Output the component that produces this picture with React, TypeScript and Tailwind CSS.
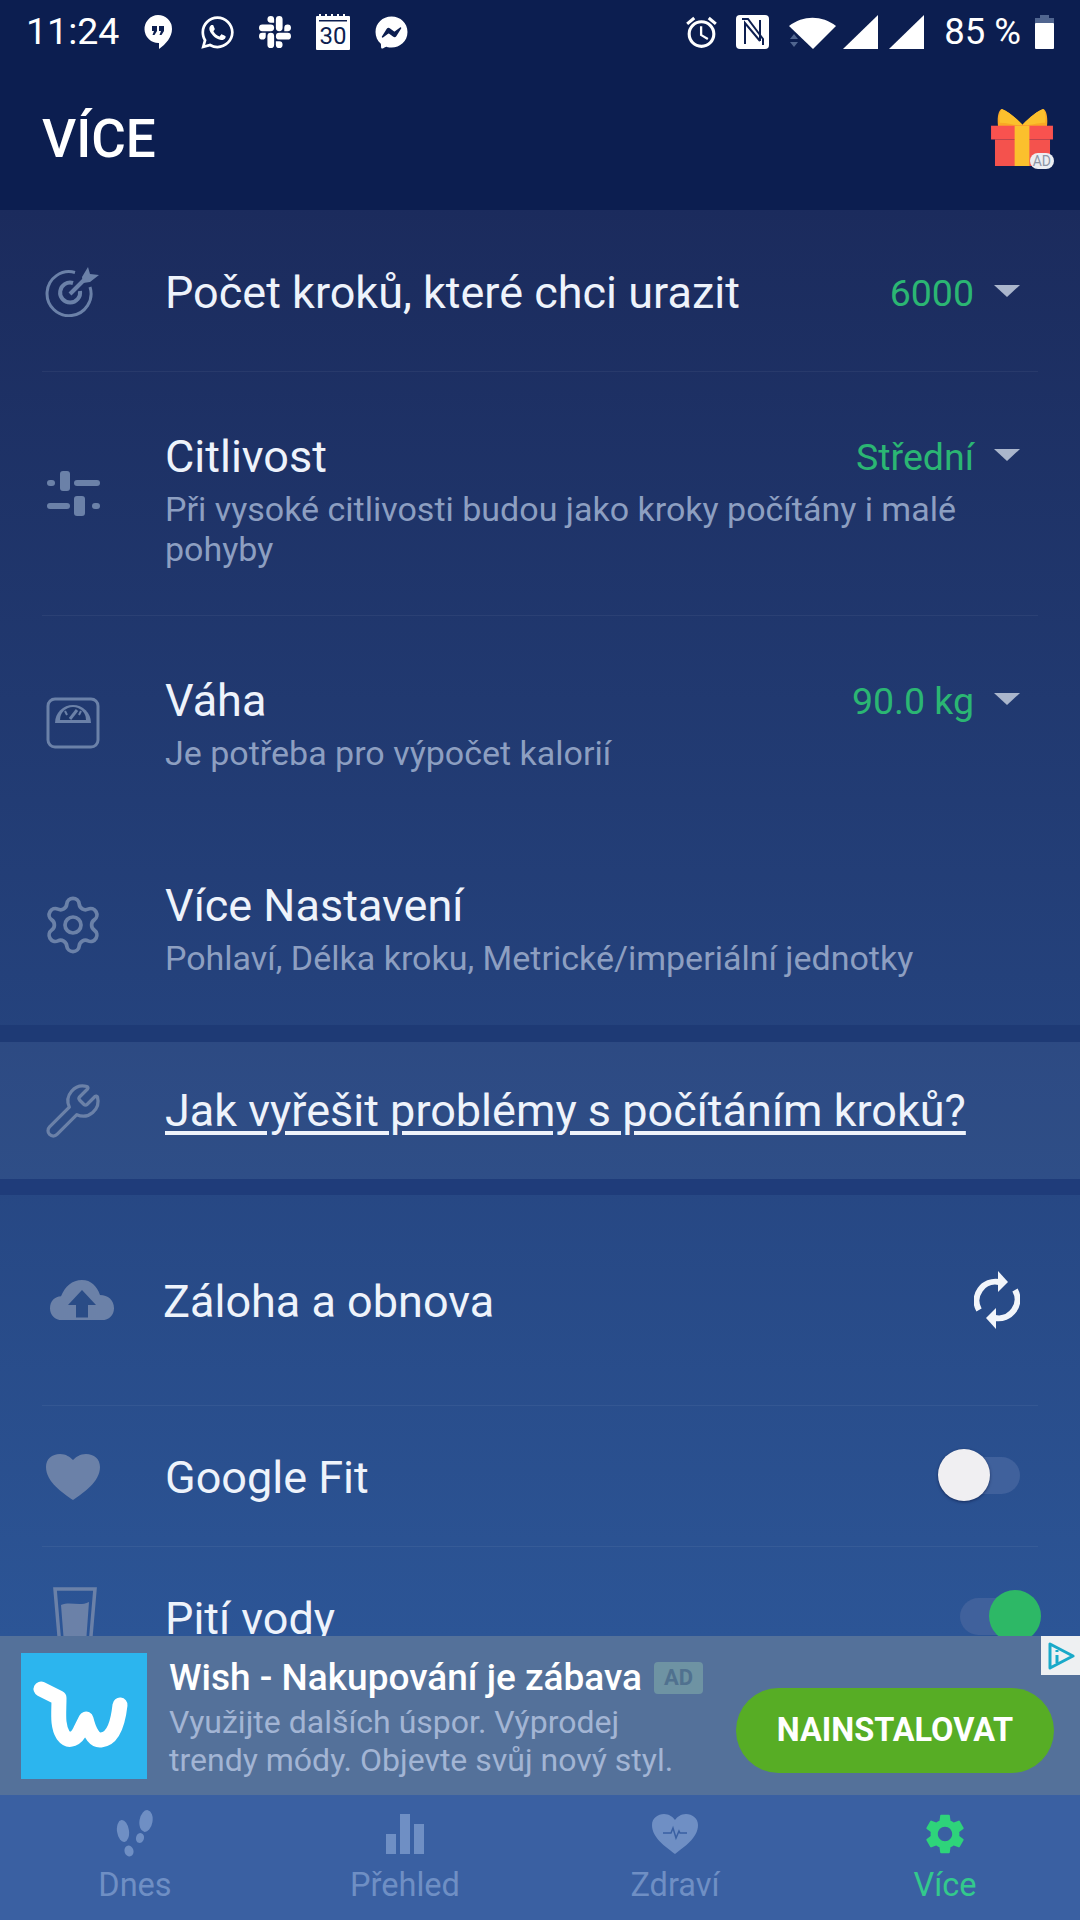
import { FaFacebookMessenger, FaWhatsapp } from "react-icons/fa";
import { MdOutlineAlarm, MdSettings } from "react-icons/md";
import { SiSlack } from "react-icons/si";
import { Settings, Wrench } from "lucide-react";
import type { ReactNode } from "react";

const ICON = "#6b81a8";

function TargetIcon() {
  return (
    <svg width="56" height="52" viewBox="0 0 56 52" fill="none" stroke={ICON}>
      <path d="M30 7.500A22 22 0 1 0 45 22" strokeWidth="3" />
      <path d="M28 18A10 10 0 1 0 35 26" strokeWidth="4" />
      <path d="M25 29L42 12" strokeWidth="4" />
      <path d="M37 12l6-10 2 7 9 1-9 7-7 1z" fill={ICON} stroke="none" />
    </svg>
  );
}

function SlidersIcon() {
  return (
    <svg width="54" height="46" viewBox="0 0 54 46" fill={ICON}>
      <rect x="1" y="9" width="8" height="6" rx="3" />
      <rect x="14" y="0" width="10" height="20" rx="3" />
      <rect x="28" y="9" width="26" height="6" rx="3" />
      <rect x="1" y="32" width="23" height="6" rx="3" />
      <rect x="28" y="25" width="11" height="20" rx="3" />
      <rect x="46" y="32" width="8" height="6" rx="3" />
    </svg>
  );
}

function ScaleIcon() {
  return (
    <svg width="54" height="52" viewBox="0 0 54 52" fill="none" stroke={ICON}>
      <rect x="2" y="2" width="50" height="48" rx="7" strokeWidth="3" />
      <path d="M9 26a18 18 0 0 1 36 0z" fill={ICON} stroke="none" />
      <path d="M14 23a13 13 0 0 1 26 0z" fill="#1d3569" stroke="none" />
      <path d="M24 22l7-9" strokeWidth="3" />
      <path d="M19 14l2 4M35 14l-2 4" strokeWidth="2" />
    </svg>
  );
}

function CloudUploadIcon() {
  return (
    <svg width="64" height="40" viewBox="0 0 64 32" preserveAspectRatio="none" fill={ICON}>
      <path d="M12 32C5 32 0 28 0 22.500 0 17 5 13 11 13 15 5 22 0 32 0 41 0 47 5 50 12 58 12 64 16 64 22.500 64 28 59 32 52 32Z" />
      <path d="M32 8L46 20H38V30H26V20H18Z" fill="#2a4c86" />
    </svg>
  );
}

function SyncIcon() {
  return (
    <svg width="46" height="58" viewBox="0 0 46 58" fill="none" stroke="#f2f5fa" strokeWidth="6">
      <path d="M5 39A19 19 0 0 1 25 11" />
      <path d="M41 19A19 19 0 0 1 21 47" />
      <path d="M24 0L34 11 24 21z" fill="#f2f5fa" stroke="none" />
      <path d="M22 37L12 47 22 58z" fill="#f2f5fa" stroke="none" />
    </svg>
  );
}

function HeartIcon() {
  return (
    <svg width="54" height="46" viewBox="0 0 54 46" fill={ICON}>
      <path d="M27 46C17 39 0 28 0 13 0 5 6 0 14 0 20 0 24 3 27 6 30 3 34 0 40 0 48 0 54 5 54 13 54 28 37 39 27 46Z" />
    </svg>
  );
}

function GlassIcon() {
  return (
    <svg width="44" height="60" viewBox="0 0 44 60" fill="none">
      <path d="M2 2H42L37 60H7Z" stroke={ICON} strokeWidth="3.500" />
      <path d="M8 18C18 14 26 20 36 15L33 56H11Z" fill={ICON} />
    </svg>
  );
}

function GiftIcon() {
  return (
    <div className="relative h-[60px] w-[63px]">
      <svg width="63" height="57" viewBox="0 0 64 58">
        <path d="M8 22C5 10 8 0 11 0 17 2 24 8 32 16 40 8 47 2 53 0 56 0 59 10 56 22Z" fill="#f9a825" />
        <path d="M11 0C17 2 24 8 32 16 28 18 18 14 9 14 8 8 9 2 11 0ZM53 0C47 2 40 8 32 16 36 18 46 14 55 14 56 8 55 2 53 0Z" fill="#fbc02d" />
        <rect x="4" y="31" width="56" height="27" fill="#f4524d" />
        <rect x="0" y="17" width="63" height="14" fill="#f9524f" />
        <rect x="24" y="17" width="15" height="41" fill="#fbc02d" />
      </svg>
      <span className="absolute right-0 bottom-0 rounded-full bg-[#eceef2] px-[3px] text-[14px] leading-[16px] text-[#8f96a6]">
        AD
      </span>
    </div>
  );
}

function StatusLeftIcons() {
  return (
    <div className="ml-[25px] flex items-center">
      <svg width="28" height="34" viewBox="0 0 28 34" fill="white">
        <path d="M14 0a14 14 0 0 1 14 14c0 8-6 15-13 20v-6A14 14 0 0 1 14 0Z" />
        <path d="M8 11h5v5l-2.500 4H8.500l1.500-4H8zM15 11h5v5l-2.500 4h-2l1.500-4h-2z" fill="#0c1e50" />
      </svg>
      <FaWhatsapp className="ml-[27px] text-[37px] text-white" />
      <SiSlack className="ml-[23px] text-[32px] text-white" />
      <svg className="ml-[25px]" width="34" height="36" viewBox="0 0 34 36">
        <path d="M1 2h32a1 1 0 0 1 1 1v32a1 1 0 0 1-1 1H1a1 1 0 0 1-1-1V3a1 1 0 0 1 1-1Z" fill="white" />
        <path d="M4 0v3M10 0v3M16 0v3M22 0v3M28 0v3" stroke="white" strokeWidth="2" />
        <rect x="3" y="6" width="28" height="1.500" fill="#0c1e50" />
        <text x="17" y="30" textAnchor="middle" fontFamily="Roboto, sans-serif" fontSize="24" fill="#0c1e50">
          30
        </text>
      </svg>
      <FaFacebookMessenger className="ml-[25px] text-[33px] text-white" />
    </div>
  );
}

function StatusRightIcons() {
  return (
    <div className="flex items-center">
      <MdOutlineAlarm className="text-[37px] text-white" />
      <svg className="ml-[16px]" width="33" height="34" viewBox="0 0 33 34">
        <rect width="33" height="34" rx="4" fill="white" />
        <path d="M9 29V8l15 18M24 5v21M6 4h6l15 20v6" fill="none" stroke="#0c1e50" strokeWidth="2" />
      </svg>
      <svg className="ml-[20px]" width="47" height="34" viewBox="0 0 47 34">
        <path d="M0 11C14 0 33 0 47 11L24 34Z" fill="white" />
        <path d="M1 24l4-5 4 5zM1 27h8l-4 5z" fill="#50658f" />
      </svg>
      <svg className="ml-[7px]" width="35" height="34" viewBox="0 0 35 34">
        <path d="M35 0V34H0Z" fill="white" />
      </svg>
      <svg className="ml-[11px]" width="35" height="34" viewBox="0 0 35 34">
        <path d="M35 0V34H0Z" fill="white" />
      </svg>
      <span className="ml-[20px] text-[36.500px] leading-none text-white">85 %</span>
      <svg className="ml-[14px]" width="19" height="34" viewBox="0 0 19 34">
        <path d="M5 0h9v3h5v6H0V3h5z" fill="#50658f" />
        <rect y="8" width="19" height="26" rx="1" fill="white" />
      </svg>
    </div>
  );
}

function Dropdown({ value }: { value: string }) {
  return (
    <div className="flex h-[56px] shrink-0 items-center">
      <span className="text-[37.500px] text-[#2bb673]">{value}</span>
      <span className="mt-[-4px] ml-[20px] h-0 w-0 border-x-[13px] border-t-[12px] border-x-transparent border-t-[#aab6cc]" />
    </div>
  );
}

function Toggle({ on }: { on?: boolean }) {
  return (
    <div className="relative h-[37px] w-[60px] rounded-full bg-[#40619c]">
      <span
        className={
          on
            ? "absolute top-[-8px] right-[-21px] h-[52px] w-[52px] rounded-full bg-[#2db866]"
            : "absolute top-[-8px] left-[-22px] h-[52px] w-[52px] rounded-full bg-[#f0eff2] shadow-[0_1px_3px_rgba(10,20,60,0.6)]"
        }
      />
    </div>
  );
}

type SettingRow = {
  icon: ReactNode;
  title: string;
  sub?: string;
  value?: string;
  // height and text offset differ per row in the original
  box: string;
  line?: boolean;
};

const settingRows: SettingRow[] = [
  {
    icon: <TargetIcon />,
    title: "Počet kroků, které chci urazit",
    value: "6000",
    box: "h-[162px] pt-[55px]",
    line: true,
  },
  {
    icon: <SlidersIcon />,
    title: "Citlivost",
    sub: "Při vysoké citlivosti budou jako kroky počítány i malé pohyby",
    value: "Střední",
    box: "h-[244px] pt-[57px]",
    line: true,
  },
  {
    icon: (
      <div className="mt-[9px]">
        <ScaleIcon />
      </div>
    ),
    title: "Váha",
    sub: "Je potřeba pro výpočet kalorií",
    value: "90.0 kg",
    box: "h-[204px] pt-[57px]",
  },
  {
    icon: (
      <div className="mt-[4px]">
        <Settings size={64} color={ICON} strokeWidth={1.4} />
      </div>
    ),
    title: "Více Nastavení",
    sub: "Pohlaví, Délka kroku, Metrické/imperiální jednotky",
    box: "h-[205px] pt-[58px]",
  },
];

function Row({ row }: { row: SettingRow }) {
  const [height, offset] = row.box.split(" ");
  return (
    <div className={`relative flex px-[42px] ${height}`}>
      <div className="flex w-[123px] shrink-0 items-center">
        <div className="flex w-[62px] justify-center">{row.icon}</div>
      </div>
      <div className={`min-w-0 flex-1 ${offset}`}>
        <div className="flex justify-between pr-[18px]">
          <span className="text-[45px] leading-[56px] text-[#eef3fb]">{row.title}</span>
          {row.value && <Dropdown value={row.value} />}
        </div>
        {row.sub && <p className="mt-[4px] pr-[70px] text-[34px] leading-[40px] text-[#8d9fc1]">{row.sub}</p>}
      </div>
      {row.line && <div className="absolute right-[42px] bottom-0 left-[42px] h-px bg-white/5" />}
    </div>
  );
}

function Footsteps() {
  return (
    <svg width="38" height="48" viewBox="0 0 38 48" fill="#6f8fc4">
      <ellipse cx="7" cy="21" rx="6" ry="11" transform="rotate(-8 7 21)" />
      <ellipse cx="13" cy="41" rx="4.500" ry="5.500" transform="rotate(-15 13 41)" />
      <ellipse cx="30" cy="11" rx="6.500" ry="11" transform="rotate(10 30 11)" />
      <ellipse cx="24" cy="28" rx="4" ry="5" transform="rotate(15 24 28)" />
    </svg>
  );
}

function Bars() {
  return (
    <svg width="38" height="40" viewBox="0 0 38 40" fill="#6f8fc4">
      <rect y="20" width="10" height="20" />
      <rect x="14" width="10" height="40" />
      <rect x="28" y="10" width="10" height="30" />
    </svg>
  );
}

function HeartPulse() {
  return (
    <svg width="46" height="40" viewBox="0 0 46 40">
      <path d="M23 40C14 33 0 24 0 11 0 4 6 0 12 0 17 0 21 3 23 6 25 3 29 0 34 0 40 0 46 4 46 11 46 24 32 33 23 40Z" fill="#6f8fc4" />
      <path d="M11 19h8l2-5 3 10 3-7 1 2h7" fill="none" stroke="#3a60a2" strokeWidth="1.500" />
    </svg>
  );
}

const navItems: { label: string; icon: ReactNode; active?: boolean }[] = [
  { label: "Dnes", icon: <Footsteps /> },
  { label: "Přehled", icon: <Bars /> },
  { label: "Zdraví", icon: <HeartPulse /> },
  { label: "Více", icon: <MdSettings size={48} color="#2ed47a" />, active: true },
];

export default function App() {
  return (
    <div
      className="flex h-[1920px] w-[1080px] flex-col overflow-hidden bg-[#0c1e50]"
      style={{ fontFamily: "Roboto, 'Noto Sans', sans-serif" }}
    >
      <header className="h-[210px] shrink-0 pr-[26px] pl-[26px]">
        <div className="flex h-[64px] items-center justify-between">
          <div className="flex items-center">
            <span className="text-[37.500px] leading-none text-white">11:24</span>
            <StatusLeftIcons />
          </div>
          <StatusRightIcons />
        </div>
        <div className="flex items-center justify-between pt-[43px] pl-[16px]">
          <h1 className="text-[53px] leading-[64px] font-medium text-white">VÍCE</h1>
          <GiftIcon />
        </div>
      </header>

      <main className="min-h-0 flex-1 overflow-hidden bg-gradient-to-b from-[#1b2b5d] to-[#2c5596]">
        {settingRows.map((row) => (
          <Row key={row.title} row={row} />
        ))}

        <div className="mt-[17px] mb-[16px] flex h-[137px] items-center bg-white/[0.04] px-[42px] shadow-[0_-17px_0_#1e3a75,0_16px_0_#1f3c7a]">
          <div className="flex w-[123px] shrink-0">
            <div className="flex w-[62px] justify-center">
              <Wrench size={60} color={ICON} strokeWidth={1.3} />
            </div>
          </div>
          <a className="text-[45px] text-[#eef3fb] underline underline-offset-[5px]">
            Jak vyřešit problémy s počítáním kroků?
          </a>
        </div>

        <div className="flex h-[210px] items-center pr-[60px] pl-[50px]">
          <div className="w-[113px] shrink-0">
            <CloudUploadIcon />
          </div>
          <span className="flex-1 pt-[4px] text-[45px] text-[#eef3fb]">Záloha a obnova</span>
          <SyncIcon />
        </div>

        <div className="relative flex h-[141px] items-center pr-[60px] pl-[46px]">
          <div className="absolute top-0 right-[42px] left-[42px] h-px bg-white/5" />
          <div className="mt-[3px] w-[119px] shrink-0">
            <HeartIcon />
          </div>
          <span className="flex-1 pt-[4px] text-[45px] text-[#eef3fb]">Google Fit</span>
          <Toggle />
        </div>

        <div className="relative flex h-[141px] items-center pr-[60px] pl-[53px]">
          <div className="absolute top-0 right-[42px] left-[42px] h-px bg-white/5" />
          <div className="w-[112px] shrink-0">
            <GlassIcon />
          </div>
          <span className="flex-1 pt-[4px] text-[45px] text-[#eef3fb]">Pití vody</span>
          <Toggle on />
        </div>
      </main>

      <aside className="relative flex h-[159px] shrink-0 items-center bg-[#54719a] pr-[26px] pl-[21px]">
        <div className="h-[126px] w-[126px] shrink-0 bg-[#2cb5ee]">
          <svg width="126" height="126" viewBox="0 0 126 126" fill="none">
            <path
              d="M20 36L38 45C38 60 36 72 42 82 48 90 56 86 60 76L65 66C68 78 73 88 80 87 92 86 97 70 99 52"
              stroke="white"
              strokeWidth="15"
              strokeLinecap="round"
              strokeLinejoin="round"
            />
          </svg>
        </div>
        <div className="ml-[22px] min-w-0 flex-1 pt-[4px]">
          <div className="mt-[-1px] mb-[3px] flex items-center">
            <span className="text-[37px] leading-[44px] font-medium text-white">Wish - Nakupování je zábava</span>
            <span className="ml-[12px] rounded-[4px] bg-[#6e93a3] px-[10px] text-[22px] leading-[32px] font-bold text-[#50718f]">
              AD
            </span>
          </div>
          <p className="text-[32px] leading-[38px] text-[#a3b5d4]">Využijte dalších úspor. Výprodej</p>
          <p className="text-[32px] leading-[38px] text-[#a3b5d4]">trendy módy. Objevte svůj nový styl.</p>
        </div>
        <button className="mt-[30px] h-[85px] w-[318px] shrink-0 rounded-full bg-[#57ad25] text-[32.500px] font-bold text-white">
          NAINSTALOVAT
        </button>
        <div className="absolute top-0 right-0 flex h-[39px] w-[39px] items-center justify-center bg-[#eef0f2]">
          <svg width="28" height="30" viewBox="0 0 28 30" fill="none" stroke="#19a9c9" strokeWidth="3">
            <path d="M3 3V27L26 15Z" strokeLinejoin="round" />
            <path d="M10 14v8M10 9v2" />
          </svg>
        </div>
      </aside>

      <nav className="grid h-[125px] shrink-0 grid-cols-4 bg-[#3a60a2]">
        {navItems.map((item) => (
          <div key={item.label} className="flex flex-col items-center pt-[14px]">
            <div className="flex h-[50px] items-center">{item.icon}</div>
            <span
              className={
                item.active
                  ? "mt-[6px] text-[32.500px] leading-[40px] text-[#33c98c]"
                  : "mt-[6px] text-[32.500px] leading-[40px] text-[#6f8fc4]"
              }
            >
              {item.label}
            </span>
          </div>
        ))}
      </nav>
    </div>
  );
}
